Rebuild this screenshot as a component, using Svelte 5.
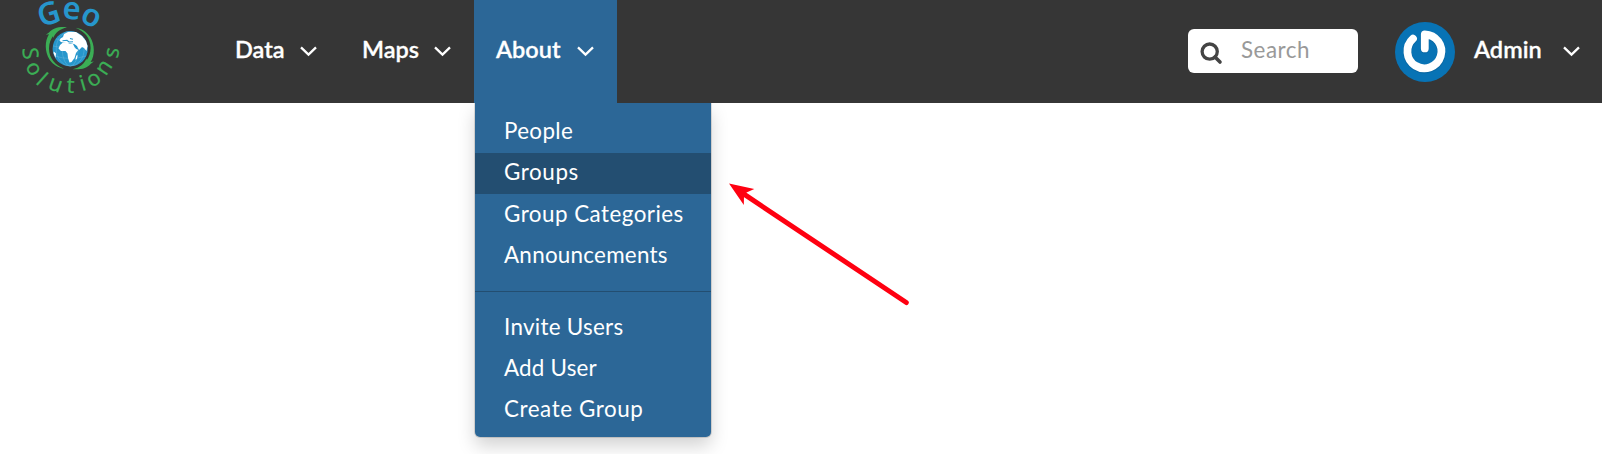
<script>
  const nav = [
    { label: 'Data', width: 127 },
    { label: 'Maps', width: 134 },
    { label: 'About', width: 143, open: true }
  ];
  const primary = [
    { label: 'People', tracking: 0.35 },
    { label: 'Groups', tracking: 0.6, active: true },
    { label: 'Group Categories', tracking: 0.47 },
    { label: 'Announcements', tracking: 0.26 }
  ];
  const secondary = [
    { label: 'Invite Users', tracking: 0.28 },
    { label: 'Add User', tracking: 0.2 },
    { label: 'Create Group', tracking: 0.57 }
  ];

  // Each glyph: centre x, centre y, rotation in degrees, half advance, half height
  const geo = [
    [48.6, 13.4, -17, 11.2, 11],
    [71.5, 10.6, 4, 9, 8.5],
    [91, 17.3, 24, 9.6, 8.5]
  ];
  const solutions = [
    [30.4, 53.3, 84, 5.8, 7.6],
    [33.2, 69, 60, 6.5, 5.9],
    [42.3, 78.8, 42, 2.8, 8.2],
    [55.3, 85.2, 20, 6.6, 5.9],
    [70.5, 85.6, 3, 3.9, 7.2],
    [82.5, 83, -16, 2.8, 7.9],
    [94, 79.7, -33, 6.5, 5.9],
    [104.5, 68, -56, 6.6, 5.9],
    [112.8, 53, -80, 5.1, 5.9]
  ];

  function place(glyphs) {
    const xs = [], ys = [], rs = [];
    for (const [cx, cy, r, w, h] of glyphs) {
      const a = (r * Math.PI) / 180;
      xs.push((cx - w * Math.cos(a) - h * Math.sin(a)).toFixed(2));
      ys.push((cy - w * Math.sin(a) + h * Math.cos(a)).toFixed(2));
      rs.push(r);
    }
    return { x: xs.join(' '), y: ys.join(' '), rotate: rs.join(' ') };
  }
  const geoPos = place(geo);
  const solPos = place(solutions);
  const swoosh =
    'M67 27.2 C58 26.5 52.5 28.5 49 32.5 L45.8 34.8 L49 34.3 C44.5 41 44.7 52 49.5 59.5 C53.5 65 58 67.8 64 68.6 C55.5 65.2 49 58.5 49 48.5 C49 43 50.8 39.5 52.8 36.3 L53.2 38 C55 33 60 28.8 67 27.2 Z';
</script>

{#snippet chevron()}
  <svg class="chevron" width="17" height="11" viewBox="0 0 17 11">
    <path d="M1 1.4 L8.5 8.6 L16 1.4" fill="none" stroke="#fff" stroke-width="2.3" />
  </svg>
{/snippet}

<div class="page">
  <header>
    <svg class="logo" width="140" height="103" viewBox="0 0 140 103">
      <circle cx="70.2" cy="48.7" r="17.6" fill="#2696cc" />
      <g fill="none" stroke="#7fc0e0" stroke-width="0.5" opacity="0.7">
        <ellipse cx="70.2" cy="48.7" rx="8" ry="17.4" />
        <ellipse cx="70.2" cy="48.7" rx="14" ry="17.4" />
        <path d="M53 46 Q70 50 88 46 M55 56 Q70 61 86 56 M56 39 Q70 42 85 39" />
      </g>
      <path fill="#fff" d="M60.5 38.5 L63 37 L64 34 L68 32 L76 32 L82 36 L86 41 L87.5 46 L86.5 51 L84 48 L82 47 L79 50 L77 46 L74 44 L71 43.5 L66 43 L61 42 L59.5 40.5 Z" />
      <path fill="#fff" d="M60 45 L63 42.5 L67 42.5 L70 44 L73 44 L75 48 L78.3 50 L76 53 L74.5 58 L71.5 62 L69.5 62.5 L68 58 L67.5 53.5 L65.5 51 L61 51 L58.5 48.5 Z" />
      <path fill="#fff" d="M76.3 55.5 L77.6 55.3 L77 59 L75.4 59.7 Z M53.8 51.5 L56 53.5 L55.5 58 L53.5 53 Z" />
      <path fill="none" stroke="#2696cc" stroke-width="1.1" d="M62.5 40.8 L67 40.3 L69 42 L73 41.8 M70 38.5 L73 39.2 M74.5 44.8 L77.3 49" />
      <g fill="#3bae55">
        <path d={swoosh} />
        <path d={swoosh} transform="rotate(180 69.8 48.2)" />
      </g>
      <text class="geo" {...geoPos}>Geo</text>
      <text class="solutions" {...solPos}>Solutions</text>
    </svg>

    <nav>
      {#each nav as item}
        <div class="nav-item" class:open={item.open} style="width: {item.width}px">
          <span>{item.label}</span>
          {@render chevron()}
          {#if item.open}
            <div class="menu">
              {#each primary as entry}
                <div class="entry" class:active={entry.active} style="letter-spacing: {entry.tracking}px">{entry.label}</div>
              {/each}
              <div class="divider"></div>
              {#each secondary as entry}
                <div class="entry" style="letter-spacing: {entry.tracking}px">{entry.label}</div>
              {/each}
            </div>
          {/if}
        </div>
      {/each}
    </nav>

    <div class="search">
      <svg width="23" height="23" viewBox="0 0 23 23">
        <circle cx="9.7" cy="9.6" r="7.6" fill="none" stroke="#444" stroke-width="3.3" />
        <path d="M15 15 L20 20" stroke="#444" stroke-width="3.6" stroke-linecap="round" />
      </svg>
      <span>Search</span>
    </div>

    <div class="user">
      <svg width="60" height="60" viewBox="0 0 60 60">
        <circle cx="30" cy="30" r="30" fill="#0873b5" />
        <path d="M18 17.4 A17 17 0 1 0 29.8 13 L29.8 27.2" fill="none" stroke="#075b91" stroke-width="8.6" stroke-linecap="round" stroke-linejoin="round" opacity="0.5" />
        <path d="M18 16.7 A17 17 0 1 0 29.8 12.3 L29.8 26.4" fill="none" stroke="#fff" stroke-width="7.8" stroke-linecap="round" stroke-linejoin="round" />
      </svg>
      <span class="name">Admin</span>
      {@render chevron()}
    </div>
  </header>

  <svg class="arrow" width="190" height="130" viewBox="0 0 190 130">
    <path d="M19 14.2 L181.3 122.5" stroke="#ff0011" stroke-width="5" stroke-linecap="round" />
    <path d="M4 3.5 L29.3 9 L21.5 12.5 L19 16.5 L18.8 25 Z" fill="#ff0011" />
  </svg>
</div>

<style>
  :global(body) { background: #fff; }
  .page {
    position: relative;
    width: 1602px;
    height: 454px;
    overflow: hidden;
    font-family: Lato, sans-serif;
    color: #fff;
  }
  header {
    display: flex;
    height: 103px;
    background: #363636;
  }
  .logo { flex: none; margin-right: 73px; }
  .geo, .solutions { font-family: "Noto Sans", sans-serif; }
  .geo { font-size: 31px; font-weight: 600; fill: #2696cc; }
  .solutions { font-size: 21.8px; fill: #3bae55; stroke: #3bae55; stroke-width: 0.2px; }
  nav { display: flex; }
  .nav-item {
    position: relative;
    box-sizing: border-box;
    display: flex;
    justify-content: space-between;
    padding: 0 23px 0 22px;
    font-size: 23.5px;
    font-weight: 600;
    line-height: 98px;
  }
  .nav-item > span, .name { -webkit-text-stroke: 0.3px #fff; }
  .nav-item.open { background: #2c6797; }
  .chevron { flex: none; margin-top: 46px; }
  .menu {
    position: absolute;
    top: 103px;
    left: 1px;
    box-sizing: border-box;
    width: 236px;
    height: 334px;
    padding-top: 9px;
    background: #2c6797;
    border-radius: 0 0 5px 5px;
    box-shadow: 0 0 0 1px rgba(0, 0, 0, 0.12), 0 9px 18px rgba(0, 0, 0, 0.175);
    clip-path: inset(0 -40px -40px -40px);
    font-size: 22.4px;
    font-weight: 400;
    line-height: 37.4px;
  }
  .entry {
    height: 41.2px;
    padding-left: 29px;
    white-space: nowrap;
  }
  .entry:nth-child(3) { line-height: 39px; }
  .entry.active { background: #234e71; }
  .divider { height: 1px; margin: 14.4px 0 15.4px; background: #234e71; }
  .search {
    box-sizing: border-box;
    display: flex;
    width: 170px;
    height: 44px;
    margin: 29px 0 0 auto;
    padding-left: 12px;
    border-radius: 6px;
    background: #fff;
    color: #999;
    font-size: 22.4px;
    letter-spacing: 0.5px;
    line-height: 42px;
  }
  .search svg { margin: 12.5px 18px 0 0; }
  .user {
    display: flex;
    box-sizing: border-box;
    width: 207px;
    margin-left: 37px;
    font-size: 23.5px;
    font-weight: 600;
    line-height: 98px;
  }
  .user > svg:first-child { flex: none; margin: 22px 19px 0 0; }
  .name { width: 89px; }
  .arrow { position: absolute; left: 725px; top: 180px; }
</style>
